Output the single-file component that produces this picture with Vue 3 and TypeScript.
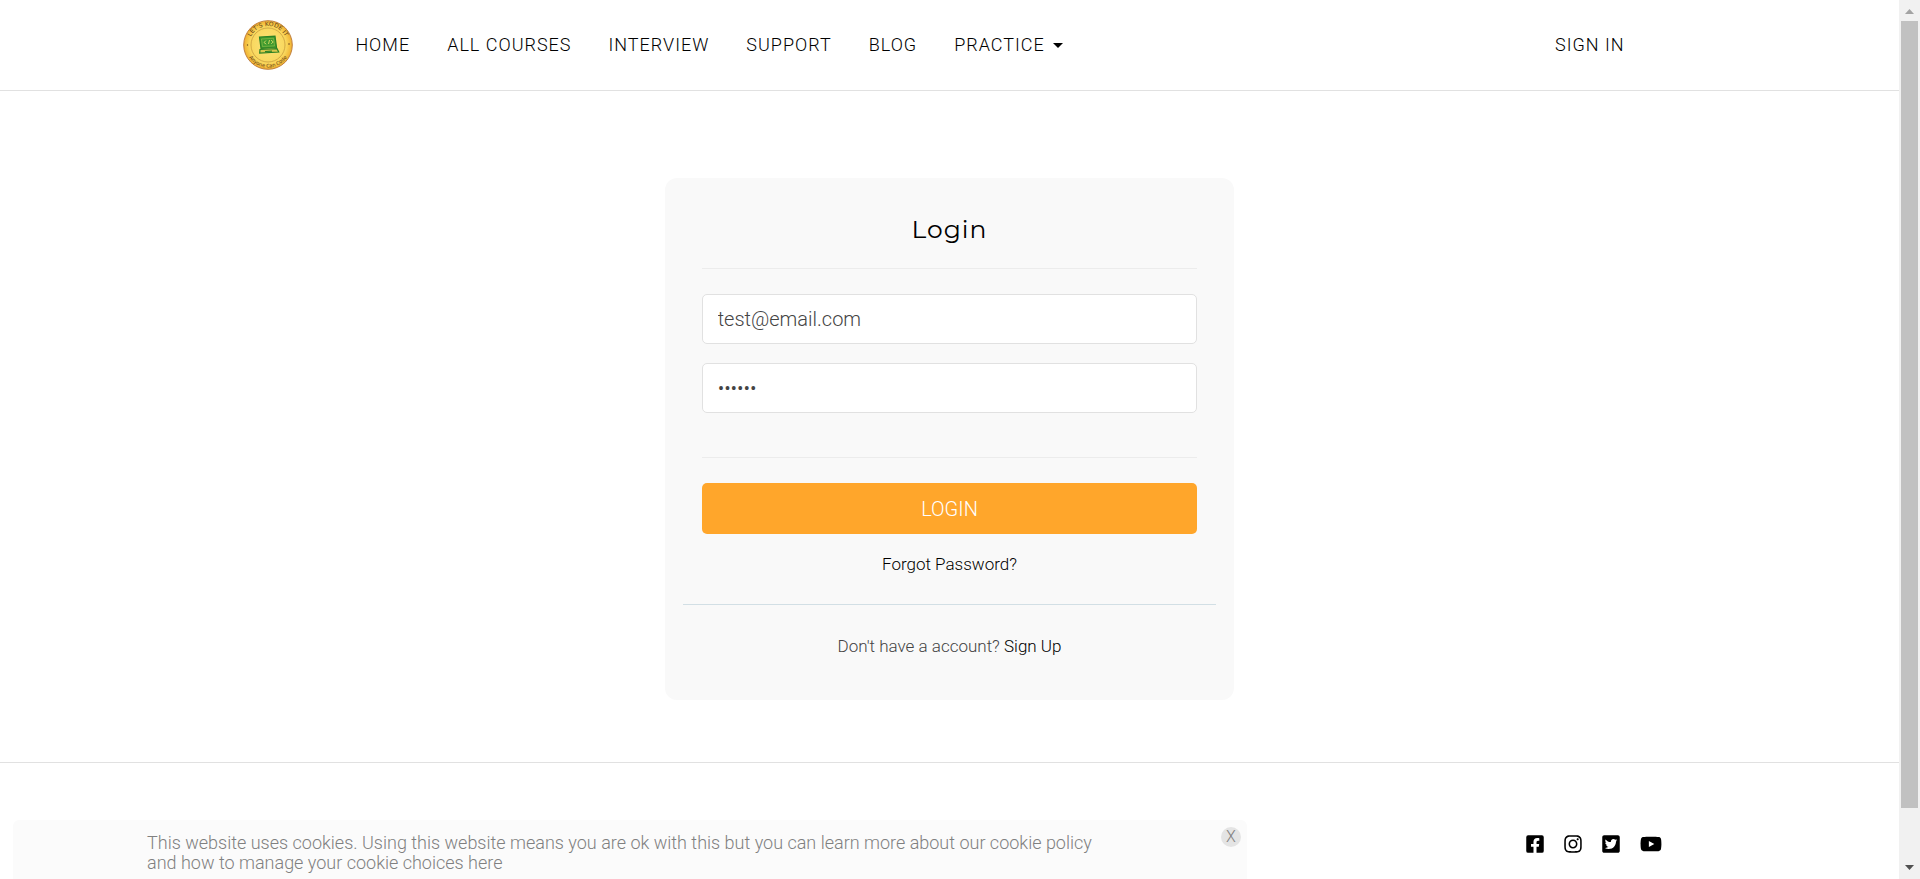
<script setup lang="ts">
import { ref } from 'vue'

interface NavItem {
  label: string
  dropdown?: boolean
}

interface SocialLink {
  name: string
  viewBox: string
  wide?: boolean
  path: string
}

const navItems: NavItem[] = [
  { label: 'HOME' },
  { label: 'ALL COURSES' },
  { label: 'INTERVIEW' },
  { label: 'SUPPORT' },
  { label: 'BLOG' },
  { label: 'PRACTICE', dropdown: true },
]

const socials: SocialLink[] = [
  {
    name: 'Facebook',
    viewBox: '0 0 448 512',
    path: 'M400 32H48A48 48 0 0 0 0 80v352a48 48 0 0 0 48 48h137.25V327.69h-63V256h63v-54.64c0-62.15 37-96.48 93.67-96.48 27.14 0 55.52 4.84 55.52 4.84v61h-31.27c-30.81 0-40.42 19.12-40.42 38.73V256h68.78l-11 71.69h-57.78V480H400a48 48 0 0 0 48-48V80a48 48 0 0 0-48-48z',
  },
  {
    name: 'Instagram',
    viewBox: '0 0 448 512',
    path: 'M224.1 141c-63.6 0-114.9 51.3-114.9 114.9s51.3 114.9 114.9 114.9S339 319.5 339 255.9 287.7 141 224.1 141zm0 189.6c-41.1 0-74.7-33.5-74.7-74.7s33.5-74.7 74.7-74.7 74.7 33.5 74.7 74.7-33.6 74.7-74.7 74.7zm146.4-194.3c0 14.9-12 26.8-26.8 26.8-14.9 0-26.8-12-26.8-26.8s12-26.8 26.8-26.8 26.8 12 26.8 26.8zm76.1 27.2c-1.7-35.9-9.9-67.7-36.2-93.9-26.2-26.2-58-34.4-93.9-36.2-37-2.1-147.9-2.1-184.9 0-35.8 1.7-67.6 9.9-93.9 36.1s-34.4 58-36.2 93.9c-2.1 37-2.1 147.9 0 184.9 1.7 35.9 9.9 67.7 36.2 93.9s58 34.4 93.9 36.2c37 2.1 147.9 2.1 184.9 0 35.9-1.7 67.7-9.9 93.9-36.2 26.2-26.2 34.4-58 36.2-93.9 2.1-37 2.1-147.8 0-184.8zM398.8 388c-7.8 19.6-22.9 34.7-42.6 42.6-29.5 11.7-99.5 9-132.1 9s-102.7 2.6-132.1-9c-19.6-7.8-34.7-22.9-42.6-42.6-11.7-29.5-9-99.5-9-132.1s-2.6-102.7 9-132.1c7.8-19.6 22.9-34.7 42.6-42.6 29.5-11.7 99.5-9 132.1-9s102.7-2.6 132.1 9c19.6 7.8 34.7 22.9 42.6 42.6 11.7 29.5 9 99.5 9 132.1s2.7 102.7-9 132.1z',
  },
  {
    name: 'Twitter',
    viewBox: '0 0 448 512',
    path: 'M400 32H48C21.5 32 0 53.5 0 80v352c0 26.5 21.5 48 48 48h352c26.5 0 48-21.5 48-48V80c0-26.5-21.5-48-48-48zm-48.9 158.8c.2 2.8.2 5.7.2 8.5 0 86.7-66 186.6-186.6 186.6-37.2 0-71.7-10.8-100.7-29.4 5.3.6 10.4.8 15.8.8 30.7 0 58.9-10.4 81.4-28-28.8-.6-53-19.5-61.3-45.5 10.1 1.5 19.2 1.5 29.6-1.2-30-6.1-52.5-32.5-52.5-64.4v-.8c8.7 4.9 18.9 7.9 29.6 8.3a65.447 65.447 0 0 1-29.2-54.6c0-12.2 3.2-23.4 8.9-33.1 32.3 39.8 80.8 65.8 135.2 68.6-9.3-44.5 24-80.6 64-80.6 18.9 0 35.9 7.9 47.9 20.7 14.8-2.8 29-8.3 41.6-15.8-4.9 15.2-15.2 28-28.8 36.1 13.2-1.4 26-5.1 37.8-10.2-8.9 13.1-20.1 24.7-32.9 34z',
  },
  {
    name: 'YouTube',
    viewBox: '0 0 576 512',
    wide: true,
    path: 'M549.655 124.083c-6.281-23.65-24.787-42.276-48.284-48.597C458.781 64 288 64 288 64S117.22 64 74.629 75.486c-23.497 6.322-42.003 24.947-48.284 48.597-11.412 42.867-11.412 132.305-11.412 132.305s0 89.438 11.412 132.305c6.281 23.65 24.787 41.5 48.284 47.821C117.22 448 288 448 288 448s170.78 0 213.371-11.486c23.497-6.321 42.003-24.171 48.284-47.821 11.412-42.867 11.412-132.305 11.412-132.305s0-89.438-11.412-132.305zm-317.51 213.508V175.185l142.739 81.205-142.739 81.201z',
  },
]

const email = ref('test@email.com')
const password = ref('secret')
const cookieVisible = ref(true)
</script>

<template>
  <div class="page">
    <header class="header">
      <div class="bar">
        <a class="logo" href="#" aria-label="Let's Kode It">
          <svg viewBox="0 0 62 62" aria-hidden="true">
            <defs>
              <radialGradient id="gold">
                <stop offset="0" stop-color="#fbe37a" />
                <stop offset="0.75" stop-color="#f9d75c" />
                <stop offset="1" stop-color="#f0b02f" />
              </radialGradient>
              <path id="arc-top" d="M12 31a19 19 0 0 1 38 0" />
              <path id="arc-bottom" d="M8.500 31a22.500 22.500 0 0 0 45 0" />
            </defs>
            <circle cx="31" cy="31" r="24.300" fill="url(#gold)" stroke="#c08040" stroke-width="1" />
            <circle cx="31" cy="31" r="17" fill="none" stroke="#b98a34" stroke-width="0.600" />
            <text class="coin-text" text-anchor="middle"><textPath href="#arc-top" startOffset="50%">LET'S KODE IT</textPath></text>
            <text class="coin-text coin-motto" text-anchor="middle"><textPath href="#arc-bottom" startOffset="50%">Anyone Can Code</textPath></text>
            <circle cx="10.500" cy="31" r="0.700" fill="#6b4a1c" />
            <circle cx="52" cy="30" r="0.800" fill="#6b4a1c" />
            <path d="M22.500 23l15.500-.8 1.500 11.300-15.500.9z" fill="#3f9a2f" stroke="#2b8023" stroke-width="1.200" />
            <path d="M24.500 25l12-.7 1 7.500-12 .7z" fill="none" stroke="#a9c84f" stroke-width="0.500" />
            <path d="M29 26.500l-2 2 2.300 1.700M31.500 30l1-4M34 26.200l2.200 1.700-2 2" fill="none" stroke="#e8e36c" stroke-width="0.800" />
            <path d="M23 35.500l17-.8 1.700 3.300-19 1z" fill="#d8c84c" stroke="#2b8023" stroke-width="1.200" />
            <path d="M28 37.500l7-.4" stroke="#2b8023" stroke-width="1.200" />
          </svg>
        </a>
        <nav class="nav" aria-label="Main">
          <a v-for="item in navItems" :key="item.label" href="#" class="nav-link">
            {{ item.label }}<span v-if="item.dropdown" class="caret"></span>
          </a>
        </nav>
        <a href="#" class="nav-link sign-in">SIGN IN</a>
      </div>
    </header>

    <main class="main">
      <section class="card">
        <form class="form" @submit.prevent>
          <h1 class="title">Login</h1>
          <hr class="rule" />
          <input v-model="email" class="field" type="email" aria-label="Email Address" />
          <input v-model="password" class="field" type="password" aria-label="Password" />
          <hr class="rule rule-lower" />
          <button class="submit" type="submit">LOGIN</button>
          <a href="#" class="forgot">Forgot Password?</a>
        </form>
        <p class="signup">Don't have a account? <a href="#">Sign Up</a></p>
      </section>
    </main>

    <footer class="footer">
      <div class="bar socials">
        <a v-for="s in socials" :key="s.name" href="#" :aria-label="s.name">
          <svg class="social" :class="{ wide: s.wide }" :viewBox="s.viewBox" aria-hidden="true">
            <path :d="s.path" />
          </svg>
        </a>
      </div>
    </footer>

    <aside v-if="cookieVisible" class="cookie">
      <p>
        This website uses cookies. Using this website means you are ok with this but you can learn more about our
        cookie policy and how to manage your cookie choices here
      </p>
      <button type="button" class="close" aria-label="Close" @click="cookieVisible = false">X</button>
    </aside>

    <div class="scrollbar" aria-hidden="true">
      <svg class="arrow" viewBox="0 0 21 21"><path d="M6 14l4.500-5 4.500 5z" fill="#a3a3a3" /></svg>
      <div class="track"><div class="thumb"></div></div>
      <svg class="arrow" viewBox="0 0 21 21"><path d="M6 7l4.500 5 4.500-5z" fill="#505050" /></svg>
    </div>
  </div>
</template>

<style>
html,
body {
  height: 100%;
  overflow: hidden;
  background: #fff;
}
</style>

<style scoped>
.page {
  box-sizing: border-box;
  height: 100vh;
  overflow: hidden;
  padding-right: 21px;
  font-family: Roboto, "Liberation Sans", sans-serif;
  font-weight: 300;
  color: #444;
}
a {
  color: #000;
  text-decoration: none;
}
.bar {
  display: flex;
  align-items: center;
  width: 75%;
  margin: 0 auto;
}
.header {
  border-bottom: 1px solid #e1e1e1;
}
.header .bar {
  height: 90px;
}
.logo,
.logo svg {
  display: block;
  width: 62px;
  height: 62px;
}
.coin-text {
  font: 400 6px "DejaVu Sans", sans-serif;
  fill: #5f4015;
}
.coin-motto {
  font-size: 5px;
}
.nav {
  display: flex;
  gap: 37px;
  margin-left: 56px;
}
.nav-link {
  display: flex;
  align-items: center;
  font-size: 18px;
  line-height: 24px;
  letter-spacing: 1px;
  white-space: nowrap;
}
.caret {
  margin-left: 8px;
  border: 5px solid transparent;
  border-top-color: #000;
  border-bottom: 0;
}
.sign-in {
  margin-left: auto;
  padding-right: 37px;
}
.main {
  padding: 87px 0 62px;
}
.card {
  box-sizing: border-box;
  width: 30%;
  min-width: 360px;
  margin: 0 auto;
  padding: 35px 18px 42px;
  border-radius: 12px;
  background: #f9f9f9;
  text-align: center;
}
.form {
  display: flex;
  flex-direction: column;
  padding: 0 19px 28px;
  border-bottom: 1px solid #d2dfe5;
}
.title {
  margin: 0;
  font: 400 25px/32px Montserrat, Inter, sans-serif;
  letter-spacing: 1px;
  color: #000;
}
.rule {
  width: 100%;
  height: 1px;
  margin: 23px 0 25px;
  border: 0;
  background: #ececec;
}
.field {
  box-sizing: border-box;
  width: 100%;
  height: 50px;
  padding: 0 15px;
  border: 1px solid #e1e1e1;
  border-radius: 5px;
  background: #fff;
  font: inherit;
  font-size: 20px;
  color: #444;
  outline: 0;
}
.field + .field {
  margin-top: 19px;
}
.rule-lower {
  margin-top: 44px;
}
.submit {
  height: 51px;
  border: 0;
  border-radius: 5px;
  background: #ffa62b;
  color: #fff;
  font: inherit;
  font-size: 20px;
}
.forgot {
  align-self: center;
  margin-top: 18px;
  font-size: 17px;
  line-height: 24px;
}
.signup {
  margin: 29px 0 0;
  font-size: 17px;
  line-height: 24px;
}
.footer {
  padding: 71px 0;
  border-top: 1px solid #e1e1e1;
}
.socials {
  justify-content: flex-end;
  gap: 20px;
}
.social {
  display: block;
  width: 18px;
  height: 20px;
}
.social.wide {
  width: 22px;
}
.cookie {
  position: fixed;
  bottom: 0;
  left: 13px;
  box-sizing: border-box;
  width: calc(65% - 14px);
  padding: 13px 140px 6px 134px;
  border-radius: 6px 6px 0 0;
  background: #fbfbfb;
  font-size: 18px;
  line-height: 20px;
  color: #808080;
}
.cookie p {
  margin: 0;
}
.close {
  position: absolute;
  top: 7px;
  right: 6px;
  width: 20px;
  height: 20px;
  padding: 0;
  border: 0;
  border-radius: 50%;
  background: #e4e4e4;
  font: inherit;
  font-size: 16px;
  color: #808080;
}
.scrollbar {
  position: fixed;
  top: 0;
  right: 0;
  bottom: 0;
  display: flex;
  flex-direction: column;
  width: 21px;
  background: #f1f1f1;
}
.arrow {
  display: block;
  width: 21px;
  height: 21px;
}
.track {
  flex: 1;
  padding: 0 2px;
}
.thumb {
  height: 94%;
  background: #c1c1c1;
}
</style>
